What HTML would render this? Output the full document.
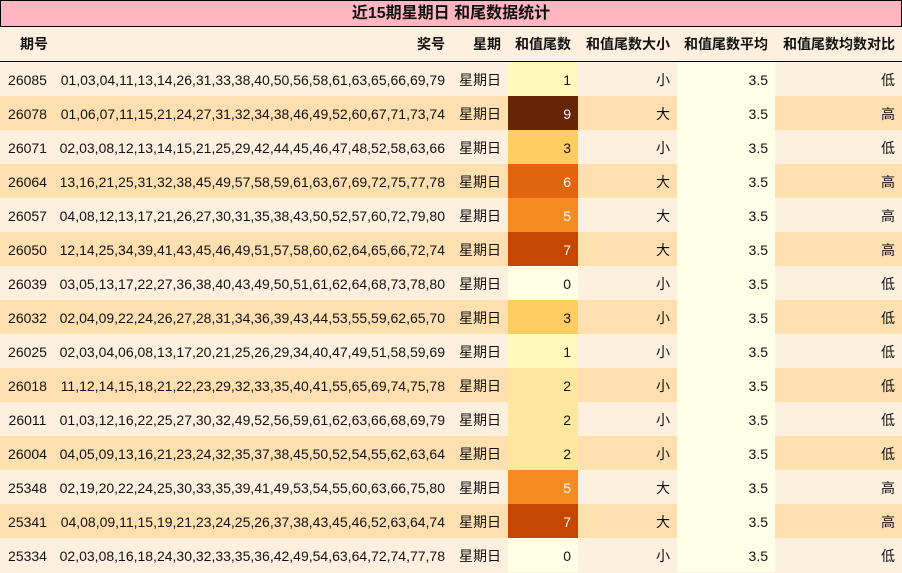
<!DOCTYPE html>
<html><head><meta charset="utf-8"><style>
body{margin:0;width:902px;height:573px;overflow:hidden;background:#fef0df;font-family:"Liberation Sans","Noto Sans CJK SC",sans-serif;font-size:14px;color:#111}
.t{height:25px;background:#ffb6c1;border:1px solid #000;text-align:center;font-weight:bold;font-size:16px;line-height:25px;box-sizing:content-box;width:900px}
table{border-collapse:collapse;table-layout:fixed;width:902px}
td,th{padding:0 7px 0 0;text-align:right;white-space:nowrap;overflow:hidden}
th{height:34px;font-weight:bold;border-bottom:1.5px solid #000;background:#fef0df}
td{height:34px;padding-top:2px;box-sizing:border-box}
tr.a td{background:#fef0df}tr.b td{background:#fddfb0}
td.n{text-align:center;padding:2px 0 0}
td.avg{background:#fffee6!important}
td.w{color:#fff}
</style></head><body>
<div class="t">近15期星期日 和尾数据统计</div>
<table>
<colgroup><col style="width:55px"><col style="width:397px"><col style="width:56px"><col style="width:70px"><col style="width:99px"><col style="width:98px"><col style="width:127px"></colgroup>
<tr><th>期号</th><th>奖号</th><th>星期</th><th>和值尾数</th><th>和值尾数大小</th><th>和值尾数平均</th><th>和值尾数均数对比</th></tr>
<tr class="a"><td class="n">26085</td><td>01,03,04,11,13,14,26,31,33,38,40,50,56,58,61,63,65,66,69,79</td><td>星期日</td><td style="background:#fff7bc">1</td><td>小</td><td class="avg">3.5</td><td>低</td></tr>
<tr class="b"><td class="n">26078</td><td>01,06,07,11,15,21,24,27,31,32,34,38,46,49,52,60,67,71,73,74</td><td>星期日</td><td class="w" style="background:#662506">9</td><td>大</td><td class="avg">3.5</td><td>高</td></tr>
<tr class="a"><td class="n">26071</td><td>02,03,08,12,13,14,15,21,25,29,42,44,45,46,47,48,52,58,63,66</td><td>星期日</td><td style="background:#fecd62">3</td><td>小</td><td class="avg">3.5</td><td>低</td></tr>
<tr class="b"><td class="n">26064</td><td>13,16,21,25,31,32,38,45,49,57,58,59,61,63,67,69,72,75,77,78</td><td>星期日</td><td class="w" style="background:#e2640f">6</td><td>大</td><td class="avg">3.5</td><td>高</td></tr>
<tr class="a"><td class="n">26057</td><td>04,08,12,13,17,21,26,27,30,31,35,38,43,50,52,57,60,72,79,80</td><td>星期日</td><td class="w" style="background:#f68b22">5</td><td>大</td><td class="avg">3.5</td><td>高</td></tr>
<tr class="b"><td class="n">26050</td><td>12,14,25,34,39,41,43,45,46,49,51,57,58,60,62,64,65,66,72,74</td><td>星期日</td><td class="w" style="background:#c54702">7</td><td>大</td><td class="avg">3.5</td><td>高</td></tr>
<tr class="a"><td class="n">26039</td><td>03,05,13,17,22,27,36,38,40,43,49,50,51,61,62,64,68,73,78,80</td><td>星期日</td><td style="background:#ffffe5">0</td><td>小</td><td class="avg">3.5</td><td>低</td></tr>
<tr class="b"><td class="n">26032</td><td>02,04,09,22,24,26,27,28,31,34,36,39,43,44,53,55,59,62,65,70</td><td>星期日</td><td style="background:#fecd62">3</td><td>小</td><td class="avg">3.5</td><td>低</td></tr>
<tr class="a"><td class="n">26025</td><td>02,03,04,06,08,13,17,20,21,25,26,29,34,40,47,49,51,58,59,69</td><td>星期日</td><td style="background:#fff7bc">1</td><td>小</td><td class="avg">3.5</td><td>低</td></tr>
<tr class="b"><td class="n">26018</td><td>11,12,14,15,18,21,22,23,29,32,33,35,40,41,55,65,69,74,75,78</td><td>星期日</td><td style="background:#fee79d">2</td><td>小</td><td class="avg">3.5</td><td>低</td></tr>
<tr class="a"><td class="n">26011</td><td>01,03,12,16,22,25,27,30,32,49,52,56,59,61,62,63,66,68,69,79</td><td>星期日</td><td style="background:#fee79d">2</td><td>小</td><td class="avg">3.5</td><td>低</td></tr>
<tr class="b"><td class="n">26004</td><td>04,05,09,13,16,21,23,24,32,35,37,38,45,50,52,54,55,62,63,64</td><td>星期日</td><td style="background:#fee79d">2</td><td>小</td><td class="avg">3.5</td><td>低</td></tr>
<tr class="a"><td class="n">25348</td><td>02,19,20,22,24,25,30,33,35,39,41,49,53,54,55,60,63,66,75,80</td><td>星期日</td><td class="w" style="background:#f68b22">5</td><td>大</td><td class="avg">3.5</td><td>高</td></tr>
<tr class="b"><td class="n">25341</td><td>04,08,09,11,15,19,21,23,24,25,26,37,38,43,45,46,52,63,64,74</td><td>星期日</td><td class="w" style="background:#c54702">7</td><td>大</td><td class="avg">3.5</td><td>高</td></tr>
<tr class="a"><td class="n">25334</td><td>02,03,08,16,18,24,30,32,33,35,36,42,49,54,63,64,72,74,77,78</td><td>星期日</td><td style="background:#ffffe5">0</td><td>小</td><td class="avg">3.5</td><td>低</td></tr>
</table>
</body></html>
